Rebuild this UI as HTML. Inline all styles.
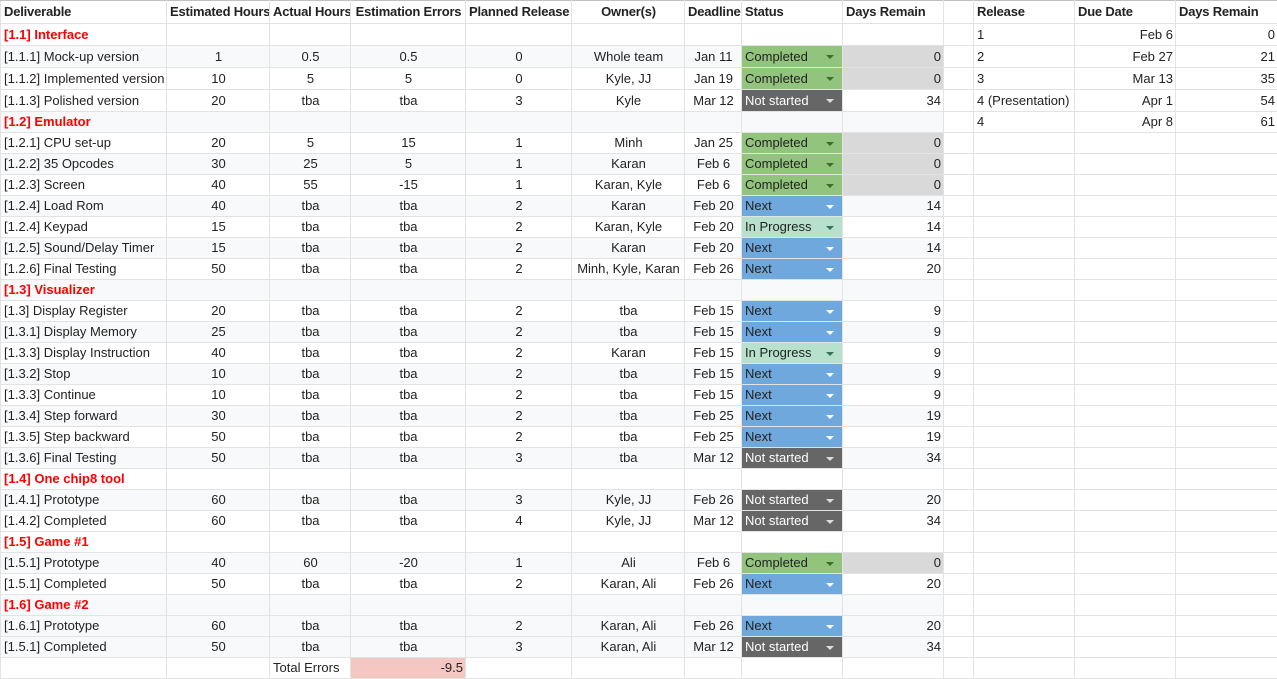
<!DOCTYPE html>
<html><head><meta charset="utf-8"><style>
body{margin:0;background:#fff;width:1277px;height:676px;overflow:hidden}
table{border-collapse:collapse;table-layout:fixed;width:1277px;font-family:"Liberation Sans",Arial,sans-serif;font-size:13px;color:#222}
td{border:1px solid #e2e3e3;padding:0 2px 0 3px;white-space:nowrap;overflow:hidden;height:20px;line-height:20px;text-align:center}
tr.h td{font-weight:bold;height:22px;border-top-color:#c0c0c0;letter-spacing:-0.2px}
tr.f td{height:21px}
td.l{text-align:left}td.r{text-align:right}
tr.g td.b{background:#f8f9fa}
td.sec{color:#f00;font-weight:bold;text-align:left}
td.s{text-align:left;position:relative}
td.s i{position:absolute;right:8px;top:9px;width:0;height:0;border-left:4px solid transparent;border-right:4px solid transparent;border-top:4px solid}
.C{background:#93c47d!important}.C i{border-top-color:#3f6e2c!important}
.N{background:#666!important;color:#fff}.N i{border-top-color:#ddd!important}
.X{background:#6fa8dc!important}.X i{border-top-color:#fff!important}
.P{background:#b7e1cd!important}.P i{border-top-color:#3a6f55!important}
.z{background:#d9d9d9!important}
</style></head><body>
<table>
<colgroup><col style="width:166px"><col style="width:103px"><col style="width:81px"><col style="width:115px"><col style="width:106px"><col style="width:113px"><col style="width:57px"><col style="width:101px"><col style="width:101px"><col style="width:30px"><col style="width:101px"><col style="width:101px"><col style="width:102px"></colgroup>
<tr class="h"><td class="l">Deliverable</td><td class="l">Estimated Hours</td><td class="l">Actual Hours</td><td>Estimation Errors</td><td>Planned Release</td><td>Owner(s)</td><td class="l">Deadline</td><td class="l">Status</td><td class="l">Days Remain</td><td></td><td class="l">Release</td><td class="l">Due Date</td><td class="l">Days Remain</td></tr>
<tr class="f"><td class="sec b">[1.1] Interface</td><td class="b"></td><td class="b"></td><td class="b"></td><td class="b"></td><td class="b"></td><td class="b"></td><td class="b"></td><td class="b"></td><td></td><td class="l">1</td><td class="r">Feb 6</td><td class="r">0</td></tr>
<tr class="f g"><td class="l b">[1.1.1] Mock-up version</td><td class="b">1</td><td class="b">0.5</td><td class="b">0.5</td><td class="b">0</td><td class="b">Whole team</td><td class="b">Jan 11</td><td class="s C">Completed<i></i></td><td class="r z">0</td><td></td><td class="l">2</td><td class="r">Feb 27</td><td class="r">21</td></tr>
<tr class="f"><td class="l b">[1.1.2] Implemented version</td><td class="b">10</td><td class="b">5</td><td class="b">5</td><td class="b">0</td><td class="b">Kyle, JJ</td><td class="b">Jan 19</td><td class="s C">Completed<i></i></td><td class="r z">0</td><td></td><td class="l">3</td><td class="r">Mar 13</td><td class="r">35</td></tr>
<tr class="f"><td class="l b">[1.1.3] Polished version</td><td class="b">20</td><td class="b">tba</td><td class="b">tba</td><td class="b">3</td><td class="b">Kyle</td><td class="b">Mar 12</td><td class="s N">Not started<i></i></td><td class="r b">34</td><td></td><td class="l">4 (Presentation)</td><td class="r">Apr 1</td><td class="r">54</td></tr>
<tr class="g"><td class="sec b">[1.2] Emulator</td><td class="b"></td><td class="b"></td><td class="b"></td><td class="b"></td><td class="b"></td><td class="b"></td><td class="b"></td><td class="b"></td><td></td><td class="l">4</td><td class="r">Apr 8</td><td class="r">61</td></tr>
<tr><td class="l b">[1.2.1] CPU set-up</td><td class="b">20</td><td class="b">5</td><td class="b">15</td><td class="b">1</td><td class="b">Minh</td><td class="b">Jan 25</td><td class="s C">Completed<i></i></td><td class="r z">0</td><td></td><td></td><td></td><td></td></tr>
<tr class="g"><td class="l b">[1.2.2] 35 Opcodes</td><td class="b">30</td><td class="b">25</td><td class="b">5</td><td class="b">1</td><td class="b">Karan</td><td class="b">Feb 6</td><td class="s C">Completed<i></i></td><td class="r z">0</td><td></td><td></td><td></td><td></td></tr>
<tr><td class="l b">[1.2.3] Screen</td><td class="b">40</td><td class="b">55</td><td class="b">-15</td><td class="b">1</td><td class="b">Karan, Kyle</td><td class="b">Feb 6</td><td class="s C">Completed<i></i></td><td class="r z">0</td><td></td><td></td><td></td><td></td></tr>
<tr class="g"><td class="l b">[1.2.4] Load Rom</td><td class="b">40</td><td class="b">tba</td><td class="b">tba</td><td class="b">2</td><td class="b">Karan</td><td class="b">Feb 20</td><td class="s X">Next<i></i></td><td class="r b">14</td><td></td><td></td><td></td><td></td></tr>
<tr><td class="l b">[1.2.4] Keypad</td><td class="b">15</td><td class="b">tba</td><td class="b">tba</td><td class="b">2</td><td class="b">Karan, Kyle</td><td class="b">Feb 20</td><td class="s P">In Progress<i></i></td><td class="r b">14</td><td></td><td></td><td></td><td></td></tr>
<tr class="g"><td class="l b">[1.2.5] Sound/Delay Timer</td><td class="b">15</td><td class="b">tba</td><td class="b">tba</td><td class="b">2</td><td class="b">Karan</td><td class="b">Feb 20</td><td class="s X">Next<i></i></td><td class="r b">14</td><td></td><td></td><td></td><td></td></tr>
<tr><td class="l b">[1.2.6] Final Testing</td><td class="b">50</td><td class="b">tba</td><td class="b">tba</td><td class="b">2</td><td class="b">Minh, Kyle, Karan</td><td class="b">Feb 26</td><td class="s X">Next<i></i></td><td class="r b">20</td><td></td><td></td><td></td><td></td></tr>
<tr class="g"><td class="sec b">[1.3] Visualizer</td><td class="b"></td><td class="b"></td><td class="b"></td><td class="b"></td><td class="b"></td><td class="b"></td><td class="b"></td><td class="b"></td><td></td><td></td><td></td><td></td></tr>
<tr><td class="l b">[1.3] Display Register</td><td class="b">20</td><td class="b">tba</td><td class="b">tba</td><td class="b">2</td><td class="b">tba</td><td class="b">Feb 15</td><td class="s X">Next<i></i></td><td class="r b">9</td><td></td><td></td><td></td><td></td></tr>
<tr class="g"><td class="l b">[1.3.1] Display Memory</td><td class="b">25</td><td class="b">tba</td><td class="b">tba</td><td class="b">2</td><td class="b">tba</td><td class="b">Feb 15</td><td class="s X">Next<i></i></td><td class="r b">9</td><td></td><td></td><td></td><td></td></tr>
<tr><td class="l b">[1.3.3] Display Instruction</td><td class="b">40</td><td class="b">tba</td><td class="b">tba</td><td class="b">2</td><td class="b">Karan</td><td class="b">Feb 15</td><td class="s P">In Progress<i></i></td><td class="r b">9</td><td></td><td></td><td></td><td></td></tr>
<tr class="g"><td class="l b">[1.3.2] Stop</td><td class="b">10</td><td class="b">tba</td><td class="b">tba</td><td class="b">2</td><td class="b">tba</td><td class="b">Feb 15</td><td class="s X">Next<i></i></td><td class="r b">9</td><td></td><td></td><td></td><td></td></tr>
<tr><td class="l b">[1.3.3] Continue</td><td class="b">10</td><td class="b">tba</td><td class="b">tba</td><td class="b">2</td><td class="b">tba</td><td class="b">Feb 15</td><td class="s X">Next<i></i></td><td class="r b">9</td><td></td><td></td><td></td><td></td></tr>
<tr class="g"><td class="l b">[1.3.4] Step forward</td><td class="b">30</td><td class="b">tba</td><td class="b">tba</td><td class="b">2</td><td class="b">tba</td><td class="b">Feb 25</td><td class="s X">Next<i></i></td><td class="r b">19</td><td></td><td></td><td></td><td></td></tr>
<tr><td class="l b">[1.3.5] Step backward</td><td class="b">50</td><td class="b">tba</td><td class="b">tba</td><td class="b">2</td><td class="b">tba</td><td class="b">Feb 25</td><td class="s X">Next<i></i></td><td class="r b">19</td><td></td><td></td><td></td><td></td></tr>
<tr class="g"><td class="l b">[1.3.6] Final Testing</td><td class="b">50</td><td class="b">tba</td><td class="b">tba</td><td class="b">3</td><td class="b">tba</td><td class="b">Mar 12</td><td class="s N">Not started<i></i></td><td class="r b">34</td><td></td><td></td><td></td><td></td></tr>
<tr><td class="sec b">[1.4] One chip8 tool</td><td class="b"></td><td class="b"></td><td class="b"></td><td class="b"></td><td class="b"></td><td class="b"></td><td class="b"></td><td class="b"></td><td></td><td></td><td></td><td></td></tr>
<tr class="g"><td class="l b">[1.4.1] Prototype</td><td class="b">60</td><td class="b">tba</td><td class="b">tba</td><td class="b">3</td><td class="b">Kyle, JJ</td><td class="b">Feb 26</td><td class="s N">Not started<i></i></td><td class="r b">20</td><td></td><td></td><td></td><td></td></tr>
<tr><td class="l b">[1.4.2] Completed</td><td class="b">60</td><td class="b">tba</td><td class="b">tba</td><td class="b">4</td><td class="b">Kyle, JJ</td><td class="b">Mar 12</td><td class="s N">Not started<i></i></td><td class="r b">34</td><td></td><td></td><td></td><td></td></tr>
<tr><td class="sec b">[1.5] Game #1</td><td class="b"></td><td class="b"></td><td class="b"></td><td class="b"></td><td class="b"></td><td class="b"></td><td class="b"></td><td class="b"></td><td></td><td></td><td></td><td></td></tr>
<tr class="g"><td class="l b">[1.5.1] Prototype</td><td class="b">40</td><td class="b">60</td><td class="b">-20</td><td class="b">1</td><td class="b">Ali</td><td class="b">Feb 6</td><td class="s C">Completed<i></i></td><td class="r z">0</td><td></td><td></td><td></td><td></td></tr>
<tr><td class="l b">[1.5.1] Completed</td><td class="b">50</td><td class="b">tba</td><td class="b">tba</td><td class="b">2</td><td class="b">Karan, Ali</td><td class="b">Feb 26</td><td class="s X">Next<i></i></td><td class="r b">20</td><td></td><td></td><td></td><td></td></tr>
<tr class="g"><td class="sec b">[1.6] Game #2</td><td class="b"></td><td class="b"></td><td class="b"></td><td class="b"></td><td class="b"></td><td class="b"></td><td class="b"></td><td class="b"></td><td></td><td></td><td></td><td></td></tr>
<tr class="g"><td class="l b">[1.6.1] Prototype</td><td class="b">60</td><td class="b">tba</td><td class="b">tba</td><td class="b">2</td><td class="b">Karan, Ali</td><td class="b">Feb 26</td><td class="s X">Next<i></i></td><td class="r b">20</td><td></td><td></td><td></td><td></td></tr>
<tr class="g"><td class="l b">[1.5.1] Completed</td><td class="b">50</td><td class="b">tba</td><td class="b">tba</td><td class="b">3</td><td class="b">Karan, Ali</td><td class="b">Mar 12</td><td class="s N">Not started<i></i></td><td class="r b">34</td><td></td><td></td><td></td><td></td></tr>
<tr><td></td><td></td><td class="l">Total Errors</td><td class="r" style="background:#f4c7c3">-9.5</td><td></td><td></td><td></td><td></td><td></td><td></td><td></td><td></td><td></td></tr>
</table>
</body></html>
